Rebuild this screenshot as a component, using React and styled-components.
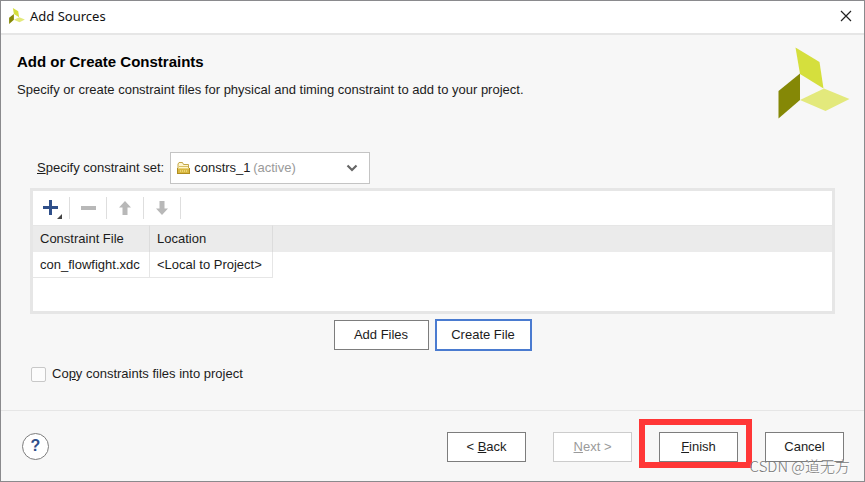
import React, { useState } from "react";
import styled, { createGlobalStyle } from "styled-components";

const palette = {
  bg: "#f7f7f7",
  line: "#e6e6e6",
  text: "#1c1c1c",
  muted: "#9a9a9a",
  border: "#7d7d7d",
  blue: "#2f4f8a",
  focus: "#4a7bd0",
  red: "#ff3636",
};

const GlobalStyle = createGlobalStyle`
  * {
    box-sizing: border-box;
  }

  body {
    margin: 0;
    background: ${palette.bg};
    color: ${palette.text};
    font: 13px / 16px "Liberation Sans", Arial, sans-serif;
  }
`;

const Dialog = styled.div`
  min-height: 100vh;
  display: flex;
  flex-direction: column;
  border: 1px solid #8a8a8d;
  background: ${palette.bg};
`;

const TitleBar = styled.header`
  display: flex;
  align-items: center;
  height: 34px;
  padding: 0 12px 2px 8px;
  background: white;
  border-bottom: 2px solid ${palette.line};
`;

const TitleText = styled.h1`
  flex: 1;
  margin: 0 0 0 5px;
  font: 13px / 18px "Noto Sans", "Open Sans", sans-serif;
  color: #111;
`;

const CloseButton = styled.button`
  display: flex;
  padding: 0;
  border: 0;
  background: none;
`;

const Intro = styled.section`
  display: flex;
  justify-content: space-between;
  height: 117px;
  padding: 12px 14px 0 16px;
`;

const Heading = styled.h2`
  margin: 6px 0 11px;
  font-size: 15px;
  line-height: 18px;
  color: #000;
`;

const Description = styled.p`
  margin: 0;
`;

const Content = styled.main`
  flex: 1;
  padding: 0 29px;
`;

const SetRow = styled.div`
  display: flex;
  align-items: center;
  gap: 6px;
  padding-left: 7px;
  margin-bottom: 4px;
`;

const SelectWrap = styled.div`
  position: relative;
  width: 200px;
`;

const Select = styled.select`
  appearance: none;
  display: block;
  width: 100%;
  height: 32px;
  padding: 0 23px;
  border: 1px solid #c4c4c4;
  border-radius: 0;
  background: white;
  color: ${palette.text};
  font: inherit;
`;

const SelectOverlay = styled.span`
  position: absolute;
  inset: 0;
  display: flex;
  align-items: center;
  padding: 0 12px 0 7px;
  color: ${palette.muted};
  pointer-events: none;
`;

const ActiveText = styled.span`
  flex: 1;
  margin-left: 63px;
`;

const Panel = styled.section`
  min-height: 126px;
  border: 3px solid ${palette.line};
  background: white;
`;

const Toolbar = styled.div`
  display: flex;
  align-items: center;
  height: 34px;
`;

const ToolButton = styled.button`
  display: flex;
  align-items: center;
  justify-content: center;
  width: 37px;
  height: 22px;
  padding: 0;
  border: 0;
  border-right: 1px solid #dedede;
  background: none;
`;

const Table = styled.table`
  width: 100%;
  border-collapse: separate;
  border-spacing: 0;
`;

const HeadCell = styled.th`
  width: ${({ $width }) => $width || "auto"};
  height: 27px;
  padding: 0 7px;
  border-top: 1px solid ${palette.line};
  border-right: ${({ $last }) => ($last ? "0" : "1px solid #dcdcdc")};
  background: #ebebeb;
  font-weight: normal;
  text-align: left;
`;

const Cell = styled.td`
  height: 26px;
  padding: 0 7px;
  border-right: 1px solid ${palette.line};
  border-bottom: 1px solid ${palette.line};
`;

const FileActions = styled.div`
  display: flex;
  align-items: center;
  justify-content: center;
  gap: 6px;
  margin-top: 5px;
`;

const Button = styled.button`
  min-width: ${({ $wide }) => ($wide ? "95px" : "79px")};
  height: 30px;
  padding: 0 10px;
  border: 1px solid ${palette.border};
  background: white;
  color: ${palette.text};
  font: inherit;

  &:disabled {
    border-color: #cccccc;
    color: ${palette.muted};
  }
`;

const PrimaryButton = styled(Button)`
  height: 32px;
  min-width: 97px;
  border: 2px solid ${palette.focus};
`;

const CopyLabel = styled.label`
  display: inline-flex;
  align-items: center;
  gap: 6px;
  margin-top: 15px;
  padding-left: 1px;
`;

const Checkbox = styled.input`
  appearance: none;
  width: 15px;
  height: 15px;
  margin: 0;
  border: 1px solid #c8c8c8;
  border-radius: 2px;
  background: #fcfcfc;

  &:checked {
    background: ${palette.focus};
  }
`;

const Footer = styled.footer`
  position: relative;
  display: flex;
  align-items: center;
  justify-content: space-between;
  height: 71px;
  padding: 0 20px 0 21px;
  border-top: 1px solid ${palette.line};
`;

const HelpButton = styled.button`
  width: 27px;
  height: 27px;
  padding: 0;
  border: 1px solid ${palette.border};
  border-radius: 50%;
  background: white;
  color: ${palette.blue};
  font: bold 16px / 24px "Liberation Sans", Arial, sans-serif;
`;

const Navigation = styled.nav`
  display: flex;
  gap: 27px;
  padding-top: 2px;
`;

const Highlight = styled.div`
  position: relative;

  &::after {
    content: "";
    position: absolute;
    inset: -13px -14px -6px -20px;
    border: 6px solid ${palette.red};
    pointer-events: none;
  }
`;

const Watermark = styled.span`
  position: absolute;
  right: 14px;
  bottom: 5px;
  color: #777;
  font: 300 15px / 20px "Noto Sans CJK SC", sans-serif;
  text-shadow: 1px 1px 0 rgba(255, 255, 255, 0.8);
  pointer-events: none;
`;

function Logo({ size }) {
  return (
    <svg width={size} height={size} viewBox="0 0 72 72" aria-hidden="true">
      <path d="M17.5 0.5 L41.5 15 L45.5 41.5 L22 27Z" fill="#d5df3d" />
      <path d="M22 26.5 V53 L0.5 71.5 V44Z" fill="#858806" />
      <path d="M22 53 L46 41.5 L71.5 52 L47.5 64Z" fill="#e3e97c" />
    </svg>
  );
}

function FolderIcon() {
  return (
    <svg width="13" height="12" viewBox="0 0 13 12" aria-hidden="true">
      <path d="M1 6 V2 L2 0.5 H5.5 L6.5 2.5 H11.5 V6" fill="#fff6cf" stroke="#c3a647" />
      <path d="M2 4.5 H11" stroke="#d9bf62" />
      <rect x="0.5" y="6.5" width="12" height="5" fill="#d9b840" stroke="#b08d20" />
      <path d="M1 6.5 H12" stroke="#e9d27a" />
      <path d="M3 9 H11" stroke="#fff0a8" strokeDasharray="1 1" />
    </svg>
  );
}

function PlusIcon() {
  return (
    <svg width="22" height="22" viewBox="0 0 22 22" aria-hidden="true">
      <path d="M3 10.5 H18 M10.5 3 V18" stroke={palette.blue} strokeWidth="3" />
      <path d="M22 17 V22 H17Z" fill="#444" />
    </svg>
  );
}

function MinusIcon() {
  return (
    <svg width="15" height="14" viewBox="0 0 15 14" aria-hidden="true">
      <path d="M0 7 H15" stroke="#b8b8b8" strokeWidth="4" />
    </svg>
  );
}

function ArrowIcon({ down }) {
  return (
    <svg width="12" height="14" viewBox="0 0 12 14" aria-hidden="true">
      <path
        d={
          down
            ? "M3.5 0 H8.5 V7.5 H12 L6 14 L0 7.5 H3.5Z"
            : "M6 0 L12 6.5 H8.5 V14 H3.5 V6.5 H0Z"
        }
        fill="#b8b8b8"
      />
    </svg>
  );
}

function App() {
  const [copyFiles, setCopyFiles] = useState(false);

  return (
    <>
      <GlobalStyle />
      <Dialog>
        <TitleBar>
          <Logo size={16} />
          <TitleText>Add Sources</TitleText>
          <CloseButton aria-label="Close">
            <svg width="12" height="12" viewBox="0 0 12 12">
              <path d="M1 1 L11 11 M11 1 L1 11" stroke="#222" strokeWidth="1.2" />
            </svg>
          </CloseButton>
        </TitleBar>
        <Intro>
          <div>
            <Heading>Add or Create Constraints</Heading>
            <Description>
              Specify or create constraint files for physical and timing
              constraint to add to your project.
            </Description>
          </div>
          <Logo size={72} />
        </Intro>
        <Content>
          <SetRow>
            <label htmlFor="constraint-set">
              <u>S</u>pecify constraint set:
            </label>
            <SelectWrap>
              <Select id="constraint-set">
                <option>constrs_1</option>
              </Select>
              <SelectOverlay>
                <FolderIcon />
                <ActiveText>(active)</ActiveText>
                <svg width="12" height="8" viewBox="0 0 12 8" aria-hidden="true">
                  <path d="M1.5 1.5 L6 6 L10.5 1.5" fill="none" stroke="#666" strokeWidth="2.2" />
                </svg>
              </SelectOverlay>
            </SelectWrap>
          </SetRow>
          <Panel>
            <Toolbar>
              <ToolButton aria-label="Add">
                <PlusIcon />
              </ToolButton>
              <ToolButton aria-label="Remove" disabled>
                <MinusIcon />
              </ToolButton>
              <ToolButton aria-label="Move up" disabled>
                <ArrowIcon />
              </ToolButton>
              <ToolButton aria-label="Move down" disabled>
                <ArrowIcon down />
              </ToolButton>
            </Toolbar>
            <Table>
              <thead>
                <tr>
                  <HeadCell $width="117px">Constraint File</HeadCell>
                  <HeadCell $width="123px">Location</HeadCell>
                  <HeadCell as="td" $last />
                </tr>
              </thead>
              <tbody>
                <tr>
                  <Cell>con_flowfight.xdc</Cell>
                  <Cell>&lt;Local to Project&gt;</Cell>
                </tr>
              </tbody>
            </Table>
          </Panel>
          <FileActions>
            <Button $wide>Add Files</Button>
            <PrimaryButton>Create File</PrimaryButton>
          </FileActions>
          <CopyLabel>
            <Checkbox
              type="checkbox"
              checked={copyFiles}
              onChange={(e) => setCopyFiles(e.target.checked)}
            />
            <span>
              Co<u>p</u>y constraints files into project
            </span>
          </CopyLabel>
        </Content>
        <Footer>
          <HelpButton aria-label="Help">?</HelpButton>
          <Navigation>
            <Button>
              &lt; <u>B</u>ack
            </Button>
            <Button disabled>
              <u>N</u>ext &gt;
            </Button>
            <Highlight>
              <Button>
                <u>F</u>inish
              </Button>
            </Highlight>
            <Button>Cancel</Button>
          </Navigation>
          <Watermark>CSDN @道无方</Watermark>
        </Footer>
      </Dialog>
    </>
  );
}

export default App;
